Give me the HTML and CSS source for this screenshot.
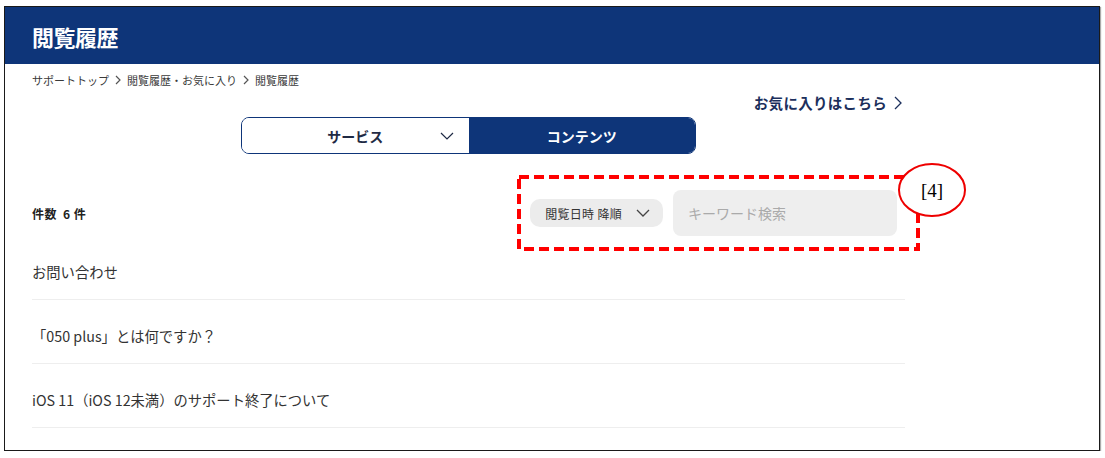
FILE: index.html
```html
<!DOCTYPE html>
<html lang="ja">

<head>
    <meta charset="UTF-8">
    <meta name="viewport" content="width=device-width, initial-scale=1.0">
    <title>閲覧履歴</title>
    <link rel="stylesheet" href="styles.css">
</head>

<body>

    <div class="frame">
        <header class="page-header">
            <h1>閲覧履歴</h1>
        </header>

        <main class="content">
            <nav class="breadcrumb">
                <a href="#">サポートトップ</a>
                <svg class="crumb-arrow" viewBox="0 0 6 10"><path d="M1 1l4 4-4 4" /></svg>
                <a href="#">閲覧履歴・お気に入り</a>
                <svg class="crumb-arrow" viewBox="0 0 6 10"><path d="M1 1l4 4-4 4" /></svg>
                <span>閲覧履歴</span>
            </nav>

            <div class="fav-row">
                <a class="fav-link" href="#">お気に入りはこちら
                    <svg class="fav-arrow" viewBox="0 0 8 14"><path d="M1 1l6 6-6 6" /></svg>
                </a>
            </div>

            <div class="tabs">
                <button class="tab">サービス
                    <svg class="tab-arrow" viewBox="0 0 14 8"><path d="M1 1l6 6 6-6" /></svg>
                </button>
                <button class="tab active">コンテンツ</button>
            </div>

            <div class="toolbar">
                <p class="count">件数&nbsp; 6 件</p>
                <div class="filters">
                    <button class="sort">閲覧日時 降順
                        <svg class="sort-arrow" viewBox="0 0 14 8"><path d="M1 1l6 6 6-6" /></svg>
                    </button>
                    <input class="search" type="text" placeholder="キーワード検索">
                </div>
            </div>

            <ul class="history">
                <li><a href="#">お問い合わせ</a></li>
                <li><a href="#">「050 plus」とは何ですか？</a></li>
                <li><a href="#">iOS 11（iOS 12未満）のサポート終了について</a></li>
            </ul>
        </main>
    </div>

    <!-- 注記 [4] -->
    <svg class="annotation" viewBox="0 0 1105 458">
        <rect x="519" y="177" width="399" height="72" fill="none" stroke="#f00" stroke-width="4" stroke-dasharray="10 5" />
        <ellipse cx="932" cy="190" rx="33" ry="26" fill="#fff" stroke="#e00" stroke-width="2" />
        <text x="932" y="197" text-anchor="middle">[4]</text>
    </svg>

</body>

</html>
```

FILE: styles.css
```css
body {
    margin: 0;
    background: #fff;
    font-family: "Noto Sans CJK JP", "Noto Sans", sans-serif;
    color: #333;
}

a {
    color: inherit;
    text-decoration: none;
}

.frame {
    box-sizing: border-box;
    width: 1096px;
    height: 445px;
    margin: 6px 0 0 4px;
    border: 1px solid #1a1a1a;
    box-shadow: 1px 1px 1px #aaa;
    background: #fff;
    overflow: hidden;
}

.page-header {
    height: 57px;
    background: #0e3579;
    display: flex;
    align-items: center;
    padding-left: 27px;
}

.page-header h1 {
    margin: 0;
    color: #fff;
    font-size: 22px;
    font-weight: bold;
    letter-spacing: -0.5px;
}

.content {
    width: 873px;
    padding-left: 27px;
}

.breadcrumb {
    display: flex;
    align-items: center;
    gap: 6px;
    margin-top: 8px;
    font-size: 11px;
    line-height: 16px;
    color: #3a3a3a;
}

.crumb-arrow {
    width: 6px;
    height: 10px;
    fill: none;
    stroke: #555;
    stroke-width: 1.2;
}

.fav-row {
    display: flex;
    justify-content: flex-end;
    margin-top: 5px;
    padding-right: 3px;
    line-height: 20px;
}

.fav-link {
    display: flex;
    align-items: center;
    gap: 7px;
    font-size: 14.5px;
    letter-spacing: 0.3px;
    font-weight: bold;
    color: #1c2f5c;
}

.fav-arrow {
    width: 8px;
    height: 14px;
    fill: none;
    stroke: #1c2f5c;
    stroke-width: 1.3;
}

.tabs {
    display: grid;
    grid-template-columns: 1fr 1fr;
    width: 455px;
    height: 37px;
    margin: 4px auto 0;
    box-sizing: border-box;
    border: 1px solid #0e3579;
    border-radius: 8px;
    overflow: hidden;
}

.tab {
    position: relative;
    border: none;
    background: #fff;
    font-family: inherit;
    font-size: 14px;
    font-weight: bold;
    color: #1f2a44;
    cursor: pointer;
}

.tab.active {
    background: #0e3579;
    color: #fff;
}

.tab-arrow {
    position: absolute;
    right: 15px;
    top: 14px;
    width: 14px;
    height: 8px;
    fill: none;
    stroke: #1f2a44;
    stroke-width: 1.2;
}

.toolbar {
    display: flex;
    align-items: center;
    justify-content: space-between;
    margin-top: 36px;
    height: 46px;
}

.count {
    margin: 0;
    font-size: 12px;
    letter-spacing: 0.4px;
    font-weight: bold;
    color: #222;
}

.filters {
    display: flex;
    align-items: center;
    gap: 10px;
    margin-right: 8px;
}

.sort {
    display: flex;
    align-items: center;
    gap: 14px;
    height: 28px;
    padding: 0 13px 0 15px;
    border: none;
    border-radius: 10px;
    background: #ececec;
    font-family: inherit;
    font-size: 12px;
    letter-spacing: 0.3px;
    color: #333;
    cursor: pointer;
}

.sort-arrow {
    width: 14px;
    height: 8px;
    fill: none;
    stroke: #444;
    stroke-width: 1.3;
}

.search {
    box-sizing: border-box;
    width: 224px;
    height: 46px;
    padding: 0 15px;
    border: none;
    border-radius: 8px;
    background: #eeeeee;
    font-family: inherit;
    font-size: 14px;
    color: #333;
}

.search::placeholder {
    color: #aaa;
}

.history {
    list-style: none;
    margin: 0;
    padding: 0;
}

.history li {
    padding: 26px 0 17px;
    line-height: 20px;
    font-size: 14.3px;
    color: #333;
    border-bottom: 1px solid #eee;
}

.annotation {
    position: absolute;
    left: 0;
    top: 0;
    width: 1105px;
    height: 458px;
    pointer-events: none;
}

.annotation text {
    font-family: "Liberation Serif", serif;
    font-size: 19px;
    fill: #000;
}
```
